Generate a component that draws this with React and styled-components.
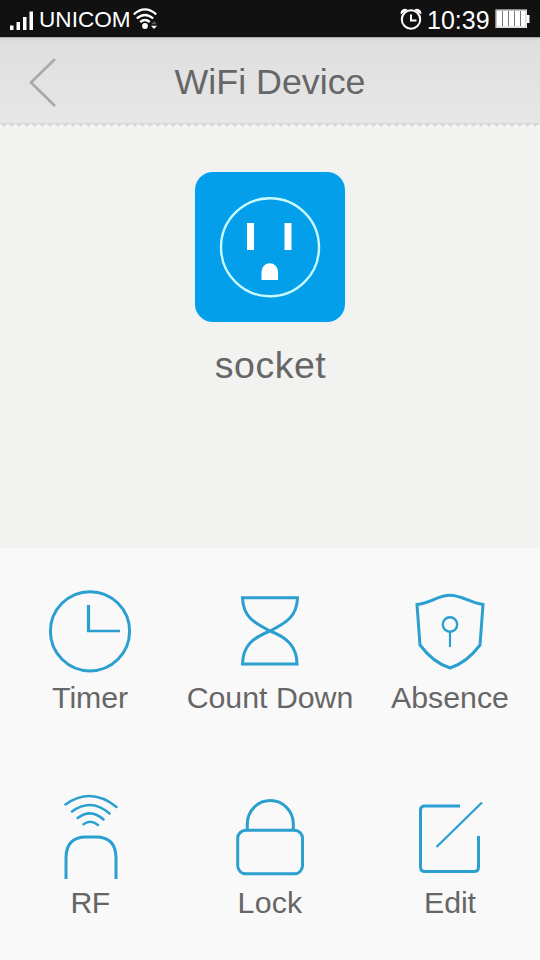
import React from "react";
import styled, { createGlobalStyle } from "styled-components";

const Global = createGlobalStyle`
  * { box-sizing: border-box; }
  body { margin: 0; background: #f9f9f9; }
`;

const Screen = styled.div`
  width: 540px;
  height: 960px;
  display: flex;
  flex-direction: column;
  overflow: hidden;
  background: #f9f9f9;
  color: #666;
  font-family: "Liberation Sans", Arial, sans-serif;
`;

const StatusBar = styled.header`
  height: 37px;
  flex: none;
  display: flex;
  align-items: center;
  justify-content: space-between;
  padding: 3px 10px 0 10px;
  background: #111;
  color: #fff;
`;

const StatusGroup = styled.div`
  display: flex;
  align-items: center;
  height: 34px;
`;

const Carrier = styled.span`
  width: 94px;
  margin-left: 5px;
  font-size: 22.6px;
  line-height: 34px;
  white-space: nowrap;
`;

const Clock = styled.span`
  width: 73px;
  padding-left: 5px;
  font-size: 25px;
  line-height: 32px;
  white-space: nowrap;
`;

const NavBar = styled.nav`
  height: 86px;
  flex: none;
  display: grid;
  grid-template-columns: 86px 1fr 86px;
  align-items: center;
  background: linear-gradient(#8c8c8c 0, #d2d2d2 1px, #dcdcdc 3px, #e0e0e0 12px, #e6e6e6 100%);
`;

const BackButton = styled.button`
  padding: 0 0 0 28px;
  border: 0;
  background: none;
  display: flex;
`;

const Title = styled.h1`
  margin: 0;
  padding-top: 4px;
  font-size: 35.8px;
  font-weight: 400;
  line-height: 44px;
  text-align: center;
`;

const Scallop = styled.svg`
  display: block;
  flex: none;
  background: #f5f5f4;
`;

const DevicePanel = styled.main`
  height: 420px;
  flex: none;
  padding-top: 44px;
  display: flex;
  flex-direction: column;
  align-items: center;
  background: #f2f2f0;
`;

const DeviceTile = styled.div`
  width: 150px;
  height: 150px;
  border-radius: 18px;
  background: #049fea;
  box-shadow: 0 0 2px #d5fbff;
`;

const DeviceName = styled.div`
  margin-top: 21px;
  padding-left: 1px;
  font-size: 37.5px;
  line-height: 44px;
  letter-spacing: 0.5px;
`;

const Actions = styled.section`
  flex: 1;
  padding-top: 37px;
  display: grid;
  grid-template-columns: repeat(3, 180px);
  grid-auto-rows: 205px;
`;

const Action = styled.button`
  padding: 0;
  border: 0;
  background: none;
  color: inherit;
  font-family: inherit;
  display: flex;
  flex-direction: column;
  align-items: center;
`;

const ActionLabel = styled.span`
  margin-top: 4px;
  font-size: 30.3px;
  line-height: 34px;
  letter-spacing: ${(p) => p.$spacing || 0}px;
  white-space: nowrap;
`;

const LineArt = styled.svg`
  display: block;
  fill: none;
  stroke: #2b9fd0;
  stroke-width: 3;
`;

/* Each icon is drawn in a 100 x 92 box centred in its column. */
const actions = [
  {
    label: "Timer",
    spacing: -0.1,
    art: (
      <>
        <circle cx="50" cy="46.300" r="39.600" />
        <path d="M48.500 20v27" strokeWidth="3.200" />
        <path d="M47 46h33" strokeWidth="2.400" />
      </>
    ),
  },
  {
    label: "Count Down",
    art: (
      <path d="M22.500 12.800H77.500C77 31 67 37.500 50 46C33 53 23 60 22.500 79H77C77 61 66 52 50 46C33 37.500 23 31 22.500 12.800Z" />
    ),
  },
  {
    label: "Absence",
    art: (
      <>
        <path d="M17 19.500C31 18 38 10.300 50 10.300C62 10.300 70 18 83 19.500L80 60Q67 77.500 50 83Q33 77.500 20 60Z" />
        <circle cx="50" cy="39.500" r="7.200" strokeWidth="2.400" />
        <path d="M50 47v15" strokeWidth="2.200" />
      </>
    ),
  },
  {
    label: "RF",
    spacing: -0.8,
    art: (
      <>
        <path d="M25.500 14.500Q51 -3.500 76.500 17M32 21.500Q51 7.500 69.500 23.500M37.700 28Q51 18 63.500 29.500M43.500 34.300Q51 29 58 35" strokeLinecap="round" strokeWidth="2.500" />
        <path d="M26 89V68Q26 47 46 47H56Q76 47 76 68V89" />
      </>
    ),
  },
  {
    label: "Lock",
    spacing: 0.2,
    art: (
      <>
        <rect x="17.700" y="40.300" width="64.800" height="43.500" rx="8" />
        <path d="M27.300 40V34A23 23.500 0 0 1 73.300 34V40" />
      </>
    ),
  },
  {
    label: "Edit",
    spacing: -0.1,
    art: (
      <>
        <path d="M60 16H25Q20.500 16 20.500 20V77Q20.500 81.500 25 81.500H74Q78.500 81.500 78.500 77V46" />
        <path d="M36.500 57L82 12.500" strokeWidth="2.300" />
      </>
    ),
  },
];

const SignalIcon = () => (
  <svg width="24" height="24" viewBox="0 0 24 24" fill="#fff">
    <path d="M0 17.500h3.500v4.500H0zM6.500 14h3.500v8H6.500zM13 9h3.500v13H13zM19.500 3.500H23v18.500h-3.500z" />
  </svg>
);

const WifiIcon = () => (
  <svg width="26" height="26" viewBox="0 0 26 26" fill="none" stroke="#fff" strokeWidth="2.300">
    <path d="M.8 7.300Q12 -2.500 23.200 7.300M3.800 11.500Q12 4.500 20.200 11.500M7.200 15Q12 11 16.800 15" />
    <circle cx="12" cy="19" r="2.900" fill="#fff" stroke="none" />
    <path d="M18 18.800h6l-3 3.300z" fill="#fff" stroke="none" />
    <path d="M18 17.300h6l-3-3.300z" fill="#555" stroke="none" />
  </svg>
);

const AlarmIcon = () => (
  <svg width="22" height="24" viewBox="0 0 22 24" fill="none" stroke="#fff" strokeWidth="2">
    <circle cx="11" cy="11.500" r="9.200" />
    <path d="M11 6.500v6h5.500" />
    <path d="M.8 6.500Q0 3 3 1.300Q5.500 0 7.500 1.800ZM21.200 6.500Q22 3 19 1.300Q16.500 0 14.500 1.800Z" fill="#fff" stroke="none" />
  </svg>
);

const BatteryIcon = () => (
  <svg width="35" height="22" viewBox="0 0 35 22">
    <path d="M.5 .5h31.500v5.500h2.500v8h-2.500v5H.5z" fill="#fff" />
    <path d="M7.500 2v15M13.500 2v15M19.500 2v15M25.500 2v15" stroke="#777" strokeWidth="1" />
    <rect x="1.500" y="1.500" width="29.500" height="16.500" fill="none" stroke="#999" strokeWidth=".6" />
  </svg>
);

const SocketFace = () => (
  <svg width="150" height="150" viewBox="0 0 150 150" fill="#fff">
    <circle cx="75" cy="75.300" r="49" fill="none" stroke="#c8faff" strokeWidth="2.400" />
    <path d="M52 51h7v27h-7zM89.500 51h7v27h-7zM66.500 108V99.500a8.250 8.250 0 0 1 16.500 0V108z" />
  </svg>
);

export default function App() {
  return (
    <Screen>
      <Global />
      <StatusBar>
        <StatusGroup>
          <SignalIcon />
          <Carrier>UNICOM</Carrier>
          <WifiIcon />
        </StatusGroup>
        <StatusGroup>
          <AlarmIcon />
          <Clock>10:39</Clock>
          <BatteryIcon />
        </StatusGroup>
      </StatusBar>
      <NavBar>
        <BackButton aria-label="Back">
          <svg width="30" height="54" viewBox="0 0 30 54" fill="none" stroke="#a8a8a8" strokeWidth="2.600">
            <path d="M27 6L3 29.500L27 53" />
          </svg>
        </BackButton>
        <Title>WiFi Device</Title>
      </NavBar>
      <Scallop width="540" height="5">
        <defs>
          <pattern id="teeth" width="7.700" height="5" patternUnits="userSpaceOnUse">
            <path d="M0 0H7.700V1Q5.500 1.200 3.850 4.500Q2.200 1.200 0 1Z" fill="#d8d8d8" />
          </pattern>
        </defs>
        <rect width="540" height="5" fill="url(#teeth)" />
      </Scallop>
      <DevicePanel>
        <DeviceTile>
          <SocketFace />
        </DeviceTile>
        <DeviceName>socket</DeviceName>
      </DevicePanel>
      <Actions>
        {actions.map((a) => (
          <Action key={a.label}>
            <LineArt width="100" height="92" viewBox="0 0 100 92">{a.art}</LineArt>
            <ActionLabel $spacing={a.spacing}>{a.label}</ActionLabel>
          </Action>
        ))}
      </Actions>
    </Screen>
  );
}
